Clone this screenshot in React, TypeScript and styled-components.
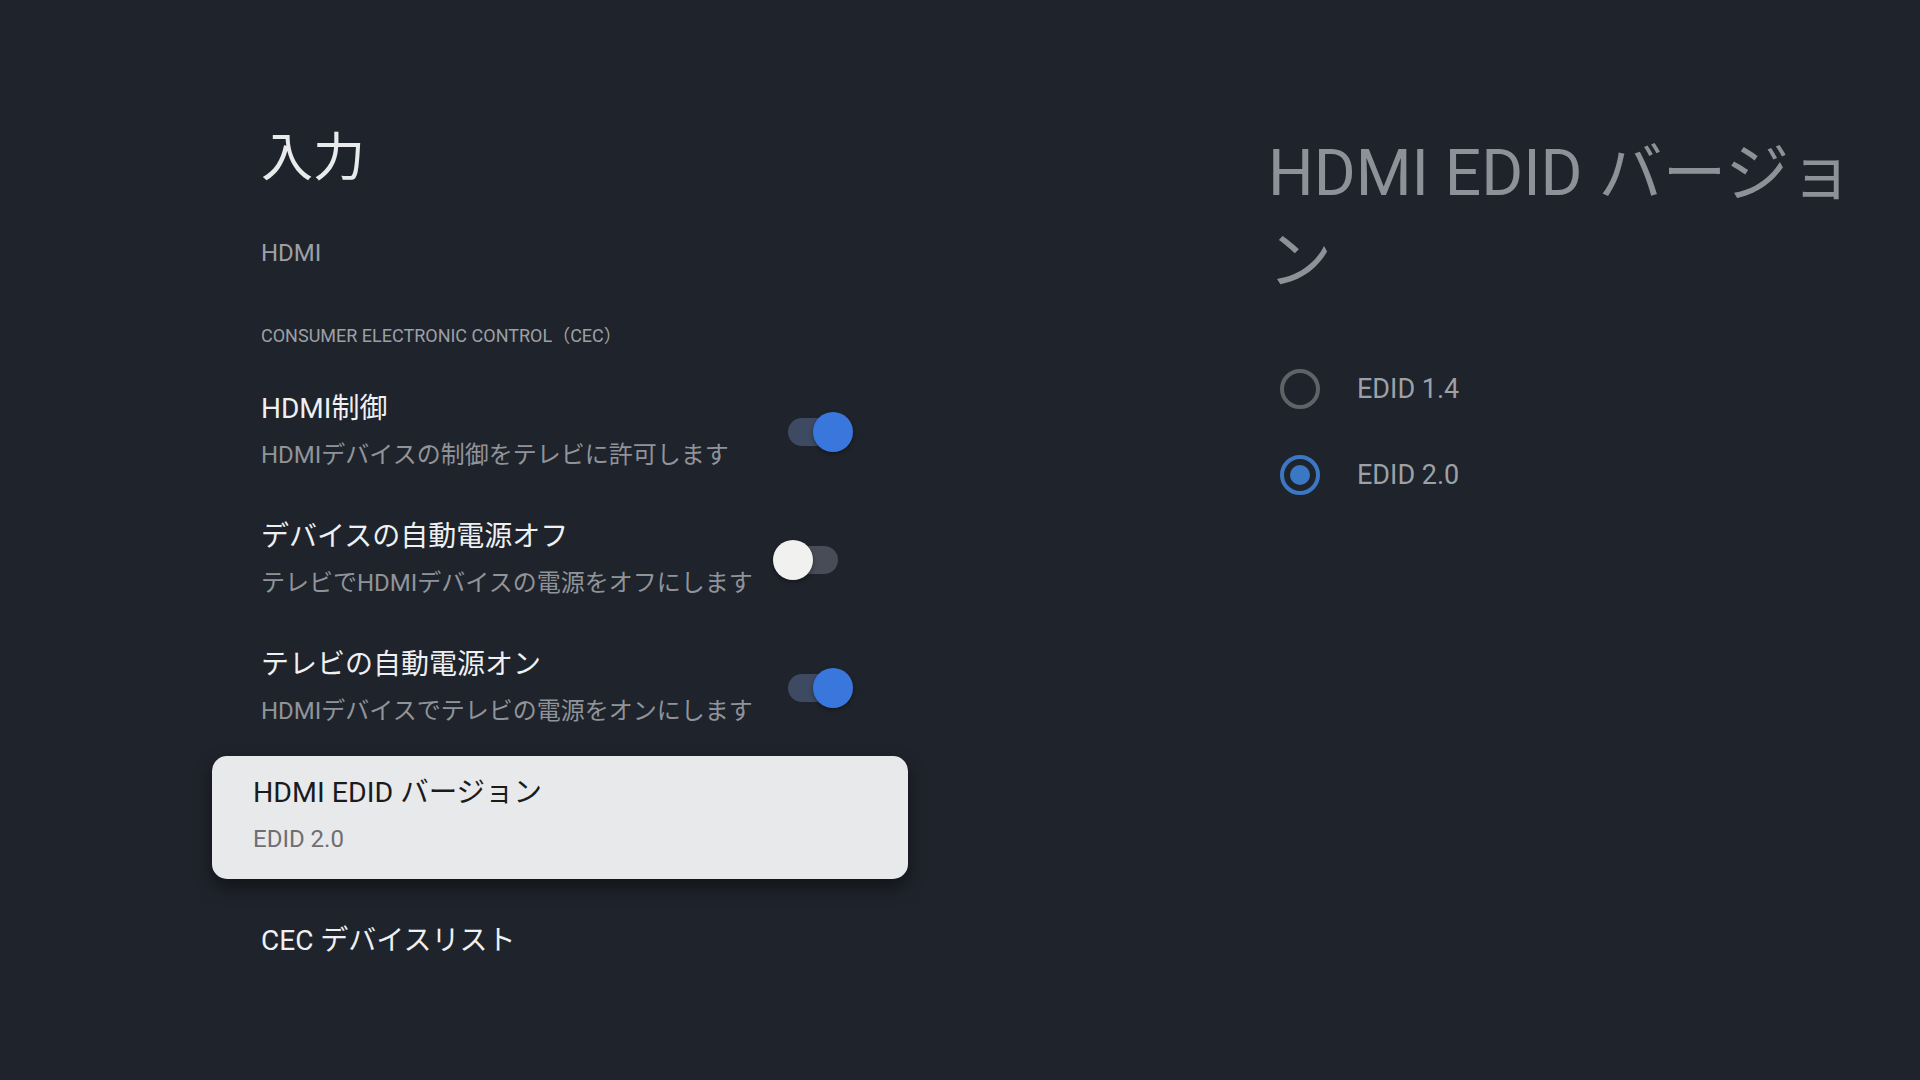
import * as React from "react";
import styled, { createGlobalStyle } from "styled-components";

interface ISwitchRow {
  title: string;
  summary: string;
  on: boolean;
}

const switchRows: ISwitchRow[] = [
  { title: "HDMI制御", summary: "HDMIデバイスの制御をテレビに許可します", on: true },
  { title: "デバイスの自動電源オフ", summary: "テレビでHDMIデバイスの電源をオフにします", on: false },
  { title: "テレビの自動電源オン", summary: "HDMIデバイスでテレビの電源をオンにします", on: true }
];

const edidOptions = [
  { label: "EDID 1.4", checked: false },
  { label: "EDID 2.0", checked: true }
];

const GlobalStyle = createGlobalStyle`
  html, body {
    margin: 0;
    padding: 0;
    background: #1f232b;
  }
  body {
    font-family: Roboto, "Noto Sans CJK JP", sans-serif;
    -webkit-font-smoothing: antialiased;
  }
`;

const App = () => (
  <>
    <GlobalStyle />
    <Screen>
      <LeftPanel>
        <PageTitle>入力</PageTitle>
        <SectionLabel>HDMI</SectionLabel>
        <CategoryLabel>CONSUMER ELECTRONIC CONTROL（CEC）</CategoryLabel>
        <List>
          {switchRows.map(row => (
            <Row key={row.title}>
              <RowText>
                <RowTitle>{row.title}</RowTitle>
                <RowSummary>{row.summary}</RowSummary>
              </RowText>
              <Switch on={row.on} />
            </Row>
          ))}
          <FocusCard>
            <CardTitle>HDMI EDID バージョン</CardTitle>
            <CardSummary>EDID 2.0</CardSummary>
          </FocusCard>
          <PlainRow>
            <RowTitle>CEC デバイスリスト</RowTitle>
          </PlainRow>
        </List>
      </LeftPanel>
      <RightPanel>
        <DetailTitle>HDMI EDID バージョン</DetailTitle>
        <RadioList>
          {edidOptions.map(opt => (
            <RadioRow key={opt.label}>
              <RadioCircle checked={opt.checked} />
              <RadioLabel>{opt.label}</RadioLabel>
            </RadioRow>
          ))}
        </RadioList>
      </RightPanel>
    </Screen>
  </>
);

const Switch = ({ on }: { on: boolean }) => (
  <SwitchBox>
    <SwitchTrack on={on} />
    <SwitchThumb on={on} />
  </SwitchBox>
);

const Screen = styled.div`
  display: flex;
  width: 1920px;
  height: 1080px;
  box-sizing: border-box;
  padding-left: 212px;
  background: #1f232b;
  overflow: hidden;
`;

const LeftPanel = styled.div`
  display: flex;
  flex-direction: column;
  width: 696px;
  padding-top: 127px;
`;

const PageTitle = styled.h1`
  margin: 0 0 0 49px;
  font-size: 52px;
  line-height: 64px;
  font-weight: 400;
  color: #e9eaec;
`;

const SectionLabel = styled.div`
  margin: 46px 0 0 49px;
  font-size: 24px;
  line-height: 32px;
  color: #9ca0a6;
`;

const CategoryLabel = styled.div`
  margin: 55px 0 0 49px;
  font-size: 18px;
  line-height: 24px;
  color: #9ca0a6;
`;

const List = styled.div`
  display: flex;
  flex-direction: column;
  margin-top: 37px;
`;

const Row = styled.div`
  display: flex;
  align-items: center;
  justify-content: space-between;
  padding: 0 55px 0 49px;
  margin-bottom: 34px;
`;

const RowText = styled.div`
  display: flex;
  flex-direction: column;
`;

const RowTitle = styled.div`
  font-size: 28px;
  line-height: 47px;
  color: #eef0f2;
  white-space: nowrap;
`;

const RowSummary = styled.div`
  font-size: 24px;
  line-height: 47px;
  color: #8f949a;
  white-space: nowrap;
`;

const SwitchBox = styled.div`
  position: relative;
  flex: none;
  width: 80px;
  height: 40px;
`;

const SwitchTrack = styled.div<{ on: boolean }>`
  position: absolute;
  top: 6px;
  left: ${p => (p.on ? "15px" : "3px")};
  width: 62px;
  height: 28px;
  border-radius: 14px;
  background: ${p => (p.on ? "#3d4a61" : "#474c56")};
`;

const SwitchThumb = styled.div<{ on: boolean }>`
  position: absolute;
  top: 0;
  left: ${p => (p.on ? "40px" : "0")};
  width: 40px;
  height: 40px;
  border-radius: 50%;
  background: ${p => (p.on ? "#3a77dd" : "#f1f1ef")};
  box-shadow: 0 2px 4px rgba(0, 0, 0, 0.35);
`;

const FocusCard = styled.div`
  display: flex;
  flex-direction: column;
  height: 123px;
  box-sizing: border-box;
  margin-top: -13px;
  padding: 13px 41px 0;
  border-radius: 15px;
  background: #e8e9eb;
  box-shadow: 0 8px 18px rgba(0, 0, 0, 0.45);
`;

const CardTitle = styled.div`
  font-size: 28.5px;
  line-height: 47px;
  color: #1a1b1d;
`;

const CardSummary = styled.div`
  font-size: 24px;
  line-height: 47px;
  color: #6c6f73;
`;

const PlainRow = styled.div`
  display: flex;
  align-items: center;
  margin-top: 38px;
  padding: 0 55px 0 49px;
`;

const RightPanel = styled.div`
  display: flex;
  flex-direction: column;
  width: 610px;
  margin-left: 360px;
  padding-top: 130px;
`;

const DetailTitle = styled.h2`
  margin: 0;
  font-size: 64px;
  line-height: 88px;
  font-weight: 400;
  color: #8d9198;
`;

const RadioList = styled.div`
  display: flex;
  flex-direction: column;
  gap: 46px;
  margin-top: 63px;
  padding-left: 12px;
`;

const RadioRow = styled.div`
  display: flex;
  align-items: center;
  height: 40px;
`;

const RadioCircle = styled.div<{ checked: boolean }>`
  position: relative;
  flex: none;
  width: 40px;
  height: 40px;
  box-sizing: border-box;
  border-radius: 50%;
  border: 4px solid ${p => (p.checked ? "#3b78c3" : "#5f6368")};

  &::after {
    content: "";
    display: ${p => (p.checked ? "block" : "none")};
    position: absolute;
    top: 6px;
    left: 6px;
    width: 20px;
    height: 20px;
    border-radius: 50%;
    background: #3b78c3;
  }
`;

const RadioLabel = styled.div`
  margin-left: 37px;
  font-size: 27px;
  line-height: 40px;
  color: #9da1a7;
`;

export default App;
